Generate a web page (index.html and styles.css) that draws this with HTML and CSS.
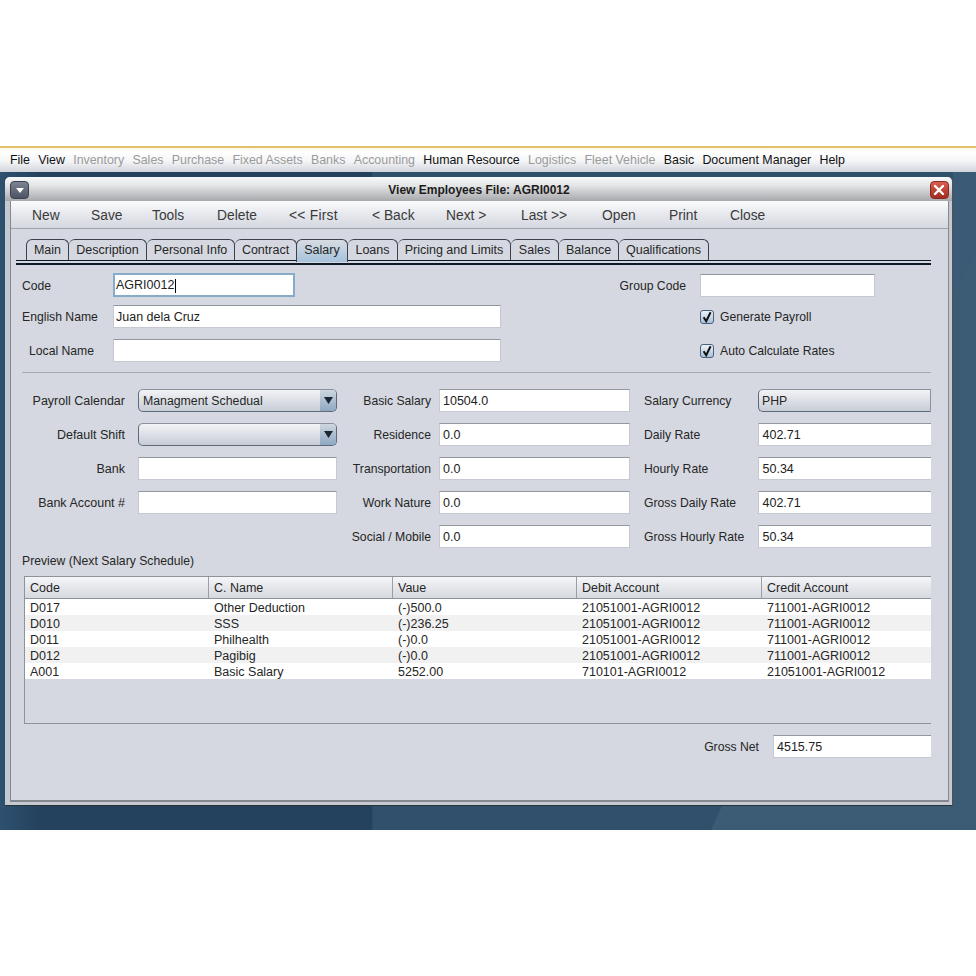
FILE: index.html
```html
<!DOCTYPE html>
<html lang="en">
<head>
<meta charset="utf-8">
<title>View Employees File</title>
<link rel="stylesheet" href="styles.css">
</head>
<body>
<div class="top-space"></div>
<nav class="menubar">
  <span>File</span><span>View</span><span class="off">Inventory</span><span class="off">Sales</span><span class="off">Purchase</span><span class="off">Fixed Assets</span><span class="off">Banks</span><span class="off">Accounting</span><span>Human Resource</span><span class="off">Logistics</span><span class="off">Fleet Vehicle</span><span>Basic</span><span>Document Manager</span><span>Help</span>
</nav>
<main class="desktop">
  <section class="window">
    <header class="titlebar">
      <span class="win-btn menu-btn"><svg width="10" height="7" viewBox="0 0 10 7"><path d="M1 1h8L5 6z" fill="#fff"/></svg></span>
      <span class="title">View Employees File: AGRI0012</span>
      <span class="win-btn close-btn"><svg width="12" height="12" viewBox="0 0 12 12"><path d="M2 2l8 8M10 2l-8 8" stroke="#fff" stroke-width="2.4" stroke-linecap="round"/></svg></span>
    </header>
    <div class="pane">
      <div class="toolbar">
        <span class="t1">New</span><span class="t2">Save</span><span class="t3">Tools</span><span class="t4">Delete</span><span class="t5">&lt;&lt; First</span><span class="t6">&lt; Back</span><span class="t7">Next &gt;</span><span class="t8">Last &gt;&gt;</span><span class="t9">Open</span><span class="t10">Print</span><span class="t11">Close</span>
      </div>
      <div class="tabs">
        <span class="tab w-main">Main</span><span class="tab w-desc">Description</span><span class="tab w-pers">Personal Info</span><span class="tab w-cont">Contract</span><span class="tab w-sal active">Salary</span><span class="tab w-loan">Loans</span><span class="tab w-pric">Pricing and Limits</span><span class="tab w-sale">Sales</span><span class="tab w-bal">Balance</span><span class="tab w-qual">Qualifications</span>
      </div>
      <div class="body">
        <div class="head-rows">
          <div class="row r1">
            <label class="l-main">Code</label>
            <div class="input focus w-code">AGRI0012<i class="caret"></i></div>
            <label class="l-group">Group Code</label>
            <div class="input w-group"></div>
          </div>
          <div class="row r2">
            <label class="l-main">English Name</label>
            <div class="input w-name">Juan dela Cruz</div>
            <div class="check"><span class="box"><svg width="12" height="12" viewBox="0 0 12 12"><path d="M2.6 6.2l2.6 4L9.6 1.2" fill="none" stroke="#111" stroke-width="2"/></svg></span>Generate Payroll</div>
          </div>
          <div class="row r3">
            <label class="l-main indent">Local Name</label>
            <div class="input w-name"></div>
            <div class="check"><span class="box"><svg width="12" height="12" viewBox="0 0 12 12"><path d="M2.6 6.2l2.6 4L9.6 1.2" fill="none" stroke="#111" stroke-width="2"/></svg></span>Auto Calculate Rates</div>
          </div>
        </div>
        <hr class="sep">
        <div class="grid">
          <label class="c1">Payroll Calendar</label>
          <div class="select">Managment Schedual<span class="arrow"><svg width="9" height="7" viewBox="0 0 9 7"><path d="M0 0h9L4.5 7z" fill="#1d2733"/></svg></span></div>
          <label class="c2">Basic Salary</label>
          <div class="input">10504.0</div>
          <label class="c3">Salary Currency</label>
          <div class="select cut">PHP</div>

          <label class="c1">Default Shift</label>
          <div class="select"><span class="arrow"><svg width="9" height="7" viewBox="0 0 9 7"><path d="M0 0h9L4.5 7z" fill="#1d2733"/></svg></span></div>
          <label class="c2">Residence</label>
          <div class="input">0.0</div>
          <label class="c3">Daily Rate</label>
          <div class="input open">402.71</div>

          <label class="c1">Bank</label>
          <div class="input"></div>
          <label class="c2">Transportation</label>
          <div class="input">0.0</div>
          <label class="c3">Hourly Rate</label>
          <div class="input open">50.34</div>

          <label class="c1">Bank Account #</label>
          <div class="input"></div>
          <label class="c2">Work Nature</label>
          <div class="input">0.0</div>
          <label class="c3">Gross Daily Rate</label>
          <div class="input open">402.71</div>

          <label class="c2 skip">Social / Mobile</label>
          <div class="input">0.0</div>
          <label class="c3">Gross Hourly Rate</label>
          <div class="input open">50.34</div>
        </div>
        <div class="preview">Preview (Next Salary Schedule)</div>
        <div class="table">
          <div class="trow thead"><span>Code</span><span>C. Name</span><span>Vaue</span><span>Debit Account</span><span>Credit Account</span></div>
          <div class="trow"><span>D017</span><span>Other Deduction</span><span>(-)500.0</span><span>21051001-AGRI0012</span><span>711001-AGRI0012</span></div>
          <div class="trow"><span>D010</span><span>SSS</span><span>(-)236.25</span><span>21051001-AGRI0012</span><span>711001-AGRI0012</span></div>
          <div class="trow"><span>D011</span><span>Philhealth</span><span>(-)0.0</span><span>21051001-AGRI0012</span><span>711001-AGRI0012</span></div>
          <div class="trow"><span>D012</span><span>Pagibig</span><span>(-)0.0</span><span>21051001-AGRI0012</span><span>711001-AGRI0012</span></div>
          <div class="trow"><span>A001</span><span>Basic Salary</span><span>5252.00</span><span>710101-AGRI0012</span><span>21051001-AGRI0012</span></div>
        </div>
        <div class="net">
          <label>Gross Net</label>
          <div class="input open w-net">4515.75</div>
        </div>
      </div>
    </div>
  </section>
</main>
</body>
</html>
```

FILE: styles.css
```css
* { box-sizing: border-box; }
html, body { margin: 0; background: #fff; }
body {
  height: 976px;
  overflow: hidden;
  font: 12.5px/1 "Liberation Sans", Arial, sans-serif;
  color: #262626;
}
label { font-size: 12.2px; padding-top: 1px; }
.top-space { height: 146px; }

.menubar {
  height: 26px;
  border-top: 2px solid #e2c26c;
  background: linear-gradient(#fdf6e6 0, #fff 4px, #f4f5f7 55%, #d2d5db 100%);
  display: flex;
  align-items: center;
  gap: 8.3px;
  padding: 1px 0 0 10px;
  font-size: 12.4px;
  color: #111;
}
.menubar .off { color: #9a9a9a; }

.desktop {
  height: 658px;
  padding: 5px 0 0 5px;
  background:
    linear-gradient(114.6deg, transparent 0 79.2%, #3c5c75 79.3%),
    linear-gradient(90deg, transparent 0 97.6%, #3a5a76 97.7%),
    linear-gradient(90deg, #2e5170 0, #24425d 4%, #24425d 38.1%, #30506b 38.2%, #30506b 100%);
}

.window {
  width: 948px;
  height: 629px;
  background: #c6c9cf;
  border-radius: 5px 5px 0 0;
  border-right: 1px solid #4e5257;
  border-bottom: 1px solid #2b3138;
  display: flex;
  flex-direction: column;
}
.titlebar {
  height: 24px;
  flex: none;
  border-radius: 5px 5px 0 0;
  background: linear-gradient(#f8f9fa, #e4e5e7 35%, #a7a8ab);
  display: flex;
  align-items: center;
  justify-content: space-between;
  padding: 2px 3px 0 5px;
}
.title { font-weight: bold; color: #1c1c1c; font-size: 12px; margin-left: -1px; }
.win-btn {
  width: 19px;
  height: 18px;
  border-radius: 4px;
  display: flex;
  align-items: center;
  justify-content: center;
}
.menu-btn { background: linear-gradient(#7d8493, #4c5363); border: 1px solid #3c4250; }
.close-btn { background: linear-gradient(#d9604f, #a32a1f); border: 1px solid #8a2a22; }

.pane {
  flex: 1;
  margin: 0 3px 3px 5px;
  background: #d5d8e0;
  border-bottom: 2px solid #85888e;
  border-left: 1px solid #85888e;
  border-right: 1px solid #85888e;
  display: flex;
  flex-direction: column;
}
.toolbar {
  height: 28px;
  flex: none;
  background: linear-gradient(#fbfbfc, #e6e8ed 50%, #d4d7df);
  border-bottom: 1px solid #9fa3aa;
  display: flex;
  align-items: center;
  font-size: 13.8px;
  color: #3a3a3a;
  padding: 2px 0 0 21px;
}
.toolbar span { display: block; }
.t1 { width: 59px; }
.t2 { width: 61px; }
.t3 { width: 65px; }
.t4 { width: 72px; }
.t5 { width: 83px; letter-spacing: .25px; }
.t6 { width: 74px; }
.t7 { width: 75px; }
.t8 { width: 81px; }
.t9 { width: 67px; }
.t10 { width: 61px; }

.tabs {
  height: 36px;
  flex: none;
  margin: 0 17px 0 5px;
  padding: 10px 0 0 10px;
  display: flex;
  border-bottom: 2px solid #0f1a28;
  background: linear-gradient(#0f1a28, #0f1a28) 0 31px / 100% 1px no-repeat;
}
.tab {
  height: 21px;
  border: 1px solid #39414d;
  border-bottom: 0;
  border-left-width: 0;
  border-radius: 6px 6px 0 0;
  display: flex;
  align-items: center;
  justify-content: center;
  padding-top: 1px;
  background: #d5d8e0;
}
.tab:first-child { border-left-width: 1px; }
.tab.active {
  height: 23px;
  background: linear-gradient(#d8dbe2, #a6c3dc);
  border-left-width: 1px;
  margin-left: -1px;
  padding-bottom: 2px;
}
.w-main { width: 43px; }
.w-desc { width: 78px; }
.w-pers { width: 88px; }
.w-cont { width: 62px; }
.w-sal { width: 52px; }
.w-loan { width: 50px; }
.w-pric { width: 113px; }
.w-sale { width: 48px; }
.w-bal { width: 60px; }
.w-qual { width: 90px; }

.body { padding: 8px 17px 0 11px; flex: 1; }

.input {
  height: 23px;
  background: #fff;
  border: 1px solid #c6c9d1;
  border-top-color: #92969e;
  padding: 1px 3px 0;
  display: flex;
  align-items: center;
  color: #222;
}
.input.open { border-right: 0; }
.grid .input.open { padding-left: 3.5px; }
.input.focus {
  height: 24px;
  border: 2px solid #87acca;
  padding-left: 1px;
}
.caret { width: 1px; height: 14px; background: #000; margin-left: 1px; }

.head-rows { display: flex; flex-direction: column; }
.row { display: flex; align-items: center; }
.r1 label { padding-top: 2px; }
.r2 { margin-top: 8px; }
.r3 { margin-top: 11px; }
.l-main { width: 91px; }
.l-main.indent { padding-left: 7px; }
.w-code { width: 182px; }
.l-group { width: 391px; text-align: right; margin-right: 14px; }
.w-group { width: 175px; }
.w-name { width: 388px; margin-right: 199px; }
.r2 .input { padding-left: 2px; }

.check { display: flex; align-items: center; gap: 6px; font-size: 12.2px; padding-top: 1px; }
.box {
  width: 14px;
  height: 14px;
  margin-top: -1px;
  border: 1px solid #46617c;
  border-radius: 3px;
  background: linear-gradient(#eef2f6, #a9c1d8);
  display: flex;
  align-items: center;
  justify-content: center;
}

.sep { border: 0; border-top: 1px solid #a6a9b0; margin: 10px 0 16px; }

.grid {
  display: grid;
  grid-template-columns: 116px 199px 102px 191px 128px 173px;
  grid-auto-rows: 23px;
  row-gap: 11px;
  align-items: center;
}
.c1 { text-align: right; padding-right: 13px; font-size: 12.5px; }
.c2 { text-align: right; padding-right: 8px; }
.c3 { padding-left: 14px; }
.skip { grid-column: 3; }

.select {
  height: 23px;
  border: 1px solid #5c6a7a;
  border-top-color: #8a929c;
  border-radius: 5px;
  background: linear-gradient(#f2f3f6, #c7ccd6);
  display: flex;
  align-items: center;
  padding: 1px 0 0 4px;
  font-size: 12.3px;
  position: relative;
}
.select.cut {
  border-radius: 5px 0 0 5px;
  border-right-color: #8a929c;
  padding-left: 3px;
}
.arrow {
  position: absolute;
  right: 0;
  top: 0;
  bottom: 0;
  width: 16px;
  border-radius: 0 4px 4px 0;
  background: linear-gradient(#cdd6e0, #8ea8c2);
  display: flex;
  align-items: center;
  justify-content: center;
}

.preview { margin-top: 7px; height: 14px; line-height: 13px; font-size: 12.2px; }

.table {
  margin: 7px 0 0 2px;
  height: 148px;
  border: 1px solid #8e929a;
  border-right: 0;
}
.trow {
  display: grid;
  grid-template-columns: 184px 184px 184px 185px 1fr;
  height: 16px;
  align-items: center;
  background: #fff;
}
.trow:nth-child(odd) { background: #f1f1f2; }
.trow span { padding: 2px 0 0 5px; }
.trow.thead {
  height: 22px;
  background: linear-gradient(#f4f5f7, #d6d9e0);
  border-bottom: 1px solid #8e929a;
}
.trow.thead span { height: 100%; display: flex; align-items: center; border-right: 1px solid #9a9ea6; padding-top: 2px; }
.trow.thead span:last-child { border-right: 0; }

.net {
  margin-top: 11px;
  display: flex;
  justify-content: flex-end;
  align-items: center;
  gap: 14px;
}
.w-net { width: 158px; }
```
